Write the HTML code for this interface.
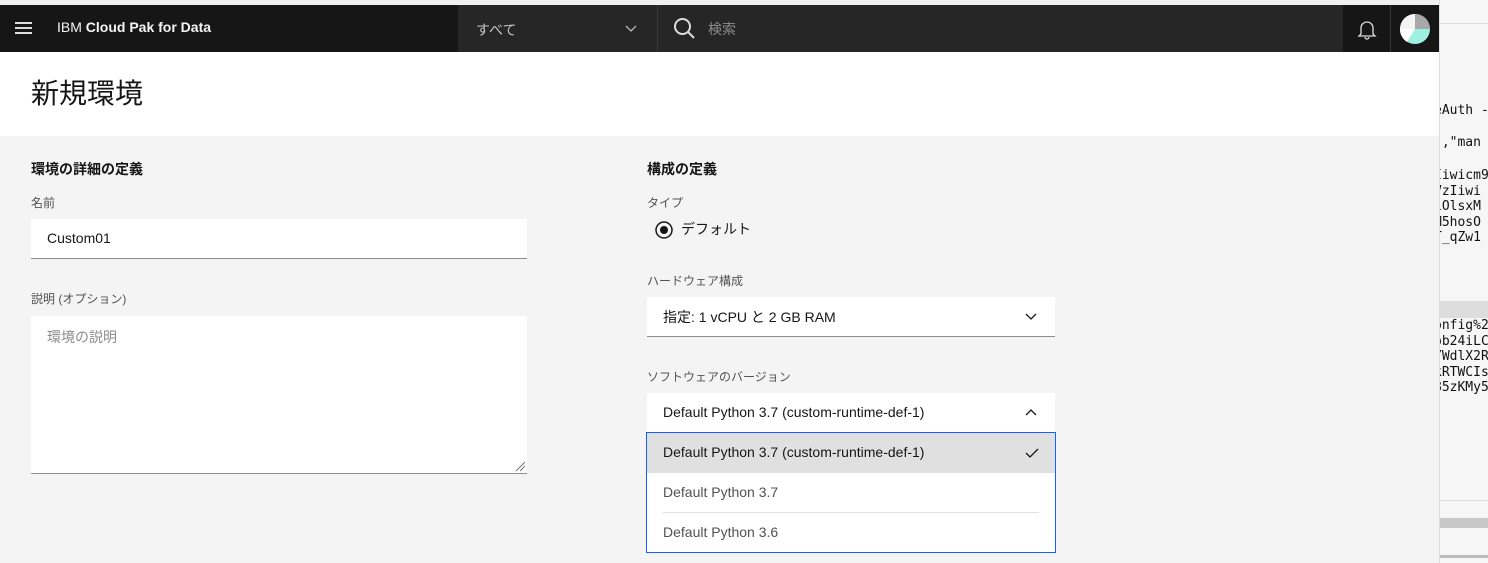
<!DOCTYPE html>
<html><head><meta charset="utf-8"><style>
*{box-sizing:border-box;margin:0;padding:0}
body{width:1488px;height:563px;overflow:hidden;background:#f4f4f4;font-family:"Liberation Sans","Noto Sans CJK JP",sans-serif;position:relative;color:#161616}
.abs{position:absolute}
.top{left:0;top:0;width:1439px;height:5px;background:#f0f0f0}
.hdr{left:0;top:5px;width:1439px;height:47px;background:#161616;color:#f4f4f4}
.lbl{font-size:12px;color:#525252}
.inp{background:#fff;border-bottom:1px solid #8d8d8d;font-size:14px}
.mono{font-family:"DejaVu Sans Mono",monospace;font-size:13px;color:#111;line-height:15.5px;white-space:pre}
</style></head><body>
<div class="abs top"></div>
<div class="abs hdr">
 <div class="abs" style="left:15px;top:17px;width:17px;height:12px;border-top:2px solid #ddd;border-bottom:2px solid #ddd"><div style="margin-top:3px;border-top:2px solid #ddd"></div></div>
 <div class="abs" style="left:57px;top:14px;font-size:14px">IBM <b>Cloud Pak for Data</b></div>
 <div class="abs" style="left:458px;top:0;width:199px;height:47px;background:#262626"></div>
 <div class="abs" style="left:476px;top:15px;font-size:14px;color:#c6c6c6">すべて</div>
 <svg class="abs" style="left:625px;top:20px" width="12" height="8"><path d="M1 1l5 5 5-5" stroke="#bbb" fill="none" stroke-width="1.3"/></svg>
 <div class="abs" style="left:657px;top:0;width:686px;height:47px;background:#262626;border-left:1px solid #393939"></div>
 <svg class="abs" style="left:673px;top:12px" width="24" height="24"><circle cx="9.5" cy="9.5" r="7.5" stroke="#ddd" stroke-width="2" fill="none"/><path d="M15 15l6 6" stroke="#ddd" stroke-width="2"/></svg>
 <div class="abs" style="left:708px;top:14px;font-size:14px;color:#8d8d8d">検索</div>
 <div class="abs" style="left:1343px;top:0;width:48px;height:47px;background:#161616;border-right:1px solid #393939"></div>
 <svg class="abs" style="left:1356px;top:13px" width="22" height="22"><path d="M5 16V10a6 6 0 0 1 12 0v6l2 2H3z M9 19a2 2 0 0 0 4 0" stroke="#ddd" stroke-width="1.3" fill="none"/></svg>
 <svg class="abs" style="left:1399px;top:8px" width="32" height="32"><circle cx="16" cy="16" r="15" fill="#9ef0e0"/><path d="M16 16L1 16A15 15 0 0 1 16 1z" fill="#f4f4f4"/><path d="M16 16L16 1A15 15 0 0 1 31 16z" fill="#a8a8a8"/><path d="M16 16L1 16A15 15 0 0 0 8 29z" fill="#fff"/></svg>
</div>
<div class="abs" style="left:0;top:52px;width:1439px;height:84px;background:#fff"></div>
<div class="abs" style="left:31px;top:72px;font-size:28px">新規環境</div>

<div class="abs" style="left:31px;top:159px;font-size:14px;font-weight:bold">環境の詳細の定義</div>
<div class="abs lbl" style="left:31px;top:194px">名前</div>
<div class="abs inp" style="left:31px;top:219px;width:496px;height:40px;padding:11px 16px">Custom01</div>
<div class="abs lbl" style="left:31px;top:290px">説明 (オプション)</div>
<div class="abs inp" style="left:31px;top:316px;width:496px;height:158px;padding:11px 16px;color:#8d8d8d">環境の説明</div>
<svg class="abs" style="left:514px;top:460px" width="12" height="12"><path d="M2 11L11 2M6 11L11 6" stroke="#777"/></svg>

<div class="abs" style="left:647px;top:159px;font-size:14px;font-weight:bold">構成の定義</div>
<div class="abs lbl" style="left:647px;top:194px">タイプ</div>
<svg class="abs" style="left:655px;top:221px" width="18" height="18"><circle cx="9" cy="9" r="8" stroke="#161616" stroke-width="1.5" fill="none"/><circle cx="9" cy="9" r="4" fill="#161616"/></svg>
<div class="abs" style="left:681px;top:219px;font-size:14px">デフォルト</div>
<div class="abs lbl" style="left:647px;top:272px">ハードウェア構成</div>
<div class="abs inp" style="left:647px;top:297px;width:408px;height:40px;padding:10px 16px">指定: 1 vCPU と 2 GB RAM</div>
<svg class="abs" style="left:1025px;top:313px" width="12" height="8"><path d="M1 1l5 5 5-5" stroke="#161616" fill="none" stroke-width="1.3"/></svg>
<div class="abs lbl" style="left:647px;top:368px">ソフトウェアのバージョン</div>
<div class="abs" style="left:647px;top:393px;width:408px;height:40px;padding:11px 16px;background:#fff;font-size:14px">Default Python 3.7 (custom-runtime-def-1)</div>
<svg class="abs" style="left:1025px;top:408px" width="12" height="8"><path d="M1 7l5-5 5 5" stroke="#161616" fill="none" stroke-width="1.3"/></svg>
<div class="abs" style="left:646px;top:432px;width:410px;height:121px;border:1px solid #0f62fe;background:#fff;font-size:14px">
 <div style="height:40px;background:#e0e0e0;padding:11px 16px">Default Python 3.7 (custom-runtime-def-1)</div>
 <svg class="abs" style="left:378px;top:14px" width="14" height="12"><path d="M1 6l4 4 8-8" stroke="#161616" fill="none" stroke-width="1.3"/></svg>
 <div style="height:40px;margin:0 16px;padding:11px 0;color:#525252;border-bottom:1px solid #e0e0e0">Default Python 3.7</div>
 <div style="height:39px;padding:11px 16px;color:#525252">Default Python 3.6</div>
</div>

<div class="abs" style="left:1439px;top:0;width:49px;height:563px;background:#f6f6f6;border-left:1px solid #ddd;overflow:hidden">
 <div class="abs" style="left:0;top:23px;width:49px;height:1px;background:#ddd"></div>
 <div class="abs" style="left:0;top:301px;width:49px;height:17px;background:#ddd"></div>
 <div class="abs" style="left:0;top:500px;width:49px;height:1px;background:#ddd"></div>
 <div class="abs" style="left:0;top:518px;width:49px;height:10px;background:#c8c8c8"></div>
 <div class="abs" style="left:0;top:555px;width:49px;height:3px;background:#bbb"></div>
 <div class="abs mono" style="left:-6px;top:103px">eAuth -</div>
 <div class="abs mono" style="left:-6px;top:135px">","man</div>
 <div class="abs mono" style="left:-6px;top:168px">Iiwicm9
VzIiwi
iOlsxM
M5hosO
T_qZw1</div>
 <div class="abs mono" style="left:-6px;top:318px">onfig%2
ob24iLC
YWdlX2R
kRTWCIs
85zKMy5</div>
</div>
</body></html>
